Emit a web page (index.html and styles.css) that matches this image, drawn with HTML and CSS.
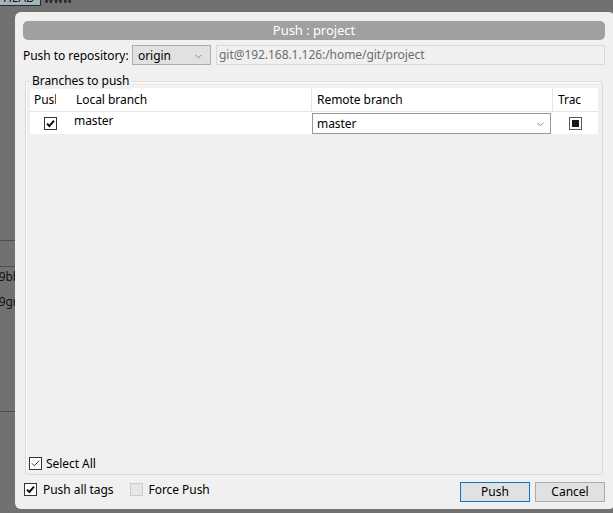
FILE: index.html
```html
<!DOCTYPE html>
<html>
<head>
<meta charset="utf-8">
<link rel="stylesheet" href="styles.css">
</head>
<body>
<div class="backdrop">
  <div class="bg-tag">HEAD</div>
  <div class="bg-www">www</div>
  <div class="bg-line l1"></div>
  <div class="bg-line l2"></div>
  <div class="bg-text t1">a9bbd</div>
  <div class="bg-text t2">a9gra</div>
  <div class="bg-line l3"></div>
</div>

<div class="dialog">
  <div class="titlebar">Push : project</div>

  <div class="repo-row">
    <div class="repo-label">Push to repository:</div>
    <div class="combo origin">
      <span>origin</span>
      <svg class="chev" width="7" height="5" viewBox="0 0 7 5"><path d="M0.5 0.8 L3.5 3.8 L6.5 0.8" fill="none" stroke="#8a8a8a" stroke-width="1"/></svg>
    </div>
    <div class="url">git@192.168.1.126:/home/git/project</div>
  </div>

  <div class="group">
    <div class="group-title">Branches to push</div>
    <div class="table">
      <div class="thead">
        <div class="th c1"><span class="clip w-push">Push</span></div>
        <div class="th c2">Local branch</div>
        <div class="th c3 div-left">Remote branch</div>
        <div class="th c4 div-left"><span class="clip w-trac">Track</span></div>
      </div>
      <div class="trow">
        <div class="td c1">
          <span class="cb cb-row">
            <svg width="11" height="11" viewBox="0 0 11 11"><path d="M2 5.6 L4.4 8 L9 2.6" fill="none" stroke="#111" stroke-width="2"/></svg>
          </span>
        </div>
        <div class="td c2 local">master</div>
        <div class="td c3">
          <div class="combo remote">
            <span>master</span>
            <svg class="chev" width="7" height="5" viewBox="0 0 7 5"><path d="M0.5 0.8 L3.5 3.8 L6.5 0.8" fill="none" stroke="#8a8a8a" stroke-width="1"/></svg>
          </div>
        </div>
        <div class="td c4">
          <span class="cb cb-track"><span class="fill"></span></span>
        </div>
      </div>
    </div>
    <div class="spacer"></div>
    <div class="check-item select-all">
      <span class="cb cb-thin">
        <svg width="11" height="11" viewBox="0 0 11 11"><path d="M2 5.4 L4.4 7.8 L9.2 2.6" fill="none" stroke="#333" stroke-width="1"/></svg>
      </span>
      <span>Select All</span>
    </div>
  </div>

  <div class="bottom">
    <div class="checks">
      <div class="check-item">
        <span class="cb cb-bold">
          <svg width="11" height="11" viewBox="0 0 11 11"><path d="M2 5.6 L4.4 8 L9 2.6" fill="none" stroke="#111" stroke-width="2"/></svg>
        </span>
        <span>Push all tags</span>
      </div>
      <div class="check-item force">
        <span class="cb cb-disabled"></span>
        <span>Force Push</span>
      </div>
    </div>
    <div class="buttons">
      <button class="btn btn-default">Push</button>
      <button class="btn">Cancel</button>
    </div>
  </div>
</div>
</body>
</html>
```

FILE: styles.css
```css
* { box-sizing: border-box; }

html, body { margin: 0; padding: 0; }

body {
  width: 613px;
  height: 513px;
  overflow: hidden;
  position: relative;
  background: #717171;
  font-family: "Noto Sans", "Liberation Sans", sans-serif;
  font-size: 12px;
  letter-spacing: -0.05px;
  color: #000;
}

/* background window behind the dialog */
.backdrop { position: absolute; inset: 0; }

.bg-tag {
  position: absolute;
  left: -4px;
  top: -11px;
  width: 45px;
  height: 17px;
  background: #a6b2ba;
  border: 1px solid #2a2a2a;
  font-size: 12px;
  line-height: 15px;
  padding-left: 6px;
  color: #111;
}

.bg-www {
  position: absolute;
  left: 44px;
  top: -10px;
  font-size: 12px;
  color: #111;
}

.bg-line {
  position: absolute;
  left: 0;
  width: 40px;
  height: 1px;
  background: #4e4e4e;
}
.l1 { top: 240px; }
.l2 { top: 266px; }
.l3 { top: 411px; }

.bg-text {
  position: absolute;
  left: -8px;
  font-size: 12px;
  color: #111;
}
.t1 { top: 268px; }
.t2 { top: 293px; }

/* dialog */
.dialog {
  position: absolute;
  left: 15px;
  top: 12px;
  width: 600px;
  height: 497px;
  background: #f0f0f0;
  border-radius: 6px;
  padding: 9px 10px 0 8px;
  display: flex;
  flex-direction: column;
}

.titlebar {
  height: 19px;
  flex: none;
  background: #a0a0a0;
  border-radius: 5px;
  color: #fff;
  font-size: 13px;
  line-height: 19px;
  text-align: center;
}

.repo-row {
  margin-top: 5px;
  height: 20px;
  flex: none;
  display: flex;
  align-items: center;
}

.repo-label { width: 109px; flex: none; }

.combo {
  position: relative;
  height: 20px;
  display: flex;
  align-items: center;
  padding-left: 5px;
}
.combo .chev { position: absolute; right: 8px; top: 8px; }

.origin {
  width: 79px;
  flex: none;
  border: 1px solid #adadad;
  background: #e1e1e1;
  margin-right: 5px;
}

.url {
  flex: 1;
  height: 20px;
  border: 1px solid #d9d9d9;
  background: #f0f0f0;
  color: #6d6d6d;
  padding-left: 2px;
  line-height: 18px;
  white-space: nowrap;
  overflow: hidden;
}

.group {
  position: relative;
  margin: 16px 2px 0 2px;
  height: 394px;
  flex: none;
  border: 1px solid #d9d9d9;
  border-radius: 3px;
  box-shadow: inset 1px 1px 0 #fff;
  padding: 6px 4px 2px 4px;
  display: flex;
  flex-direction: column;
}

.group-title {
  position: absolute;
  left: 4px;
  top: -10px;
  padding: 0 2px;
  background: #f0f0f0;
  line-height: 17px;
}

.table { background: #fff; flex: none; }

.thead, .trow {
  display: grid;
  grid-template-columns: 41px 240px 241px 1fr;
}

.thead {
  height: 24px;
  border-bottom: 1px solid #e5e5e5;
}

.th {
  padding-left: 4px;
  line-height: 23px;
  white-space: nowrap;
  overflow: hidden;
}
.th.c2 { padding-left: 5px; }
.th.c3, .th.c4 { padding-left: 5px; }
.div-left { border-left: 1px solid #e5e5e5; }

.clip { display: inline-block; overflow: hidden; white-space: nowrap; vertical-align: top; }
.w-push { width: 22px; }
.w-trac { width: 23px; }

.trow { height: 22px; }
.td { display: flex; align-items: center; }
.td.c1 { padding-left: 14px; }
.td.local { align-items: flex-start; padding-left: 3px; line-height: 17px; }
.td.c3 { align-items: flex-start; padding-left: 1px; padding-top: 1px; }
.td.c4 { padding-left: 17px; }

.remote {
  width: 239px;
  height: 21px;
  border: 1px solid #9a9a9a;
  background: #fff;
  padding-left: 4px;
}
.remote .chev { top: 8px; right: 6px; }

/* checkboxes */
.cb {
  width: 13px;
  height: 13px;
  flex: none;
  display: inline-flex;
  align-items: center;
  justify-content: center;
  background: #fff;
  border: 1px solid #333;
}

.cb-track { border-color: #555; }
.cb-track .fill { width: 7px; height: 7px; background: #1a1a1a; }

.cb-disabled { background: #e6e6e6; border-color: #cccccc; }

.check-item { display: flex; align-items: center; gap: 6px; }

.select-all { margin-left: -1px; gap: 4px; }

.spacer { flex: 1; }

.bottom {
  margin-top: 7px;
  height: 20px;
  flex: none;
  display: flex;
  justify-content: space-between;
  align-items: flex-start;
}

.checks { display: flex; align-items: center; padding-left: 1px; height: 14px; }
.force { margin-left: 16px; }

.buttons { display: flex; gap: 5px; }

.btn {
  width: 70px;
  height: 20px;
  padding: 0;
  border: 1px solid #adadad;
  background: #e1e1e1;
  font-family: inherit;
  font-size: 12px;
  color: #000;
  line-height: 18px;
}
.btn-default { border-color: #0078d7; }
```
